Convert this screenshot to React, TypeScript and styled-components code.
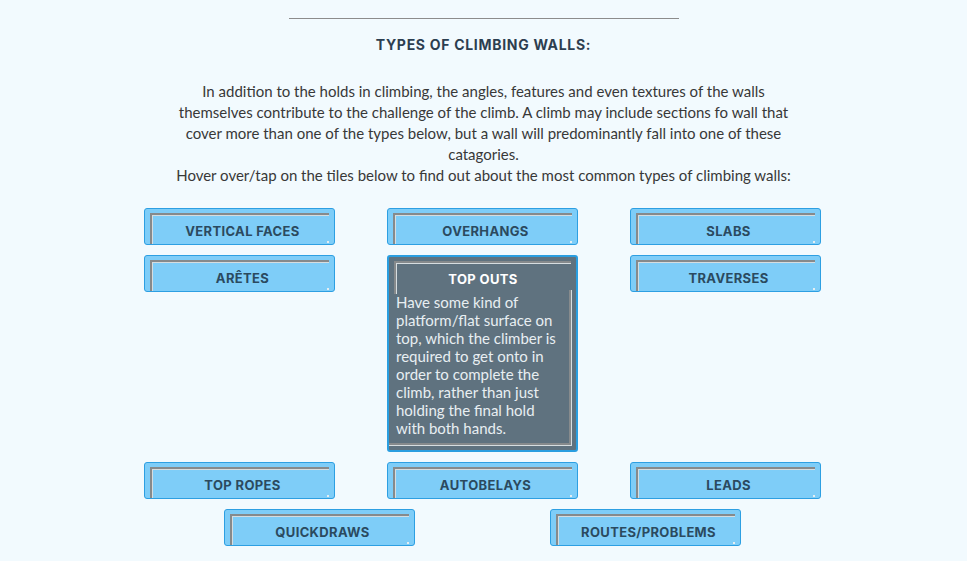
import styled, { createGlobalStyle, css } from 'styled-components'

const GlobalStyle = createGlobalStyle`
  body {
    margin: 0;
    background: #f2fafe;
    font-family: Lato, "Open Sans", sans-serif;
  }
`

const Page = styled.main`
  display: flex;
  flex-direction: column;
  align-items: center;
  padding-top: 18px;
  padding-bottom: 14px;
`

const Rule = styled.hr`
  width: 390px;
  height: 1px;
  margin: 0;
  border: none;
  background: #8c8c8c;
`

const Heading = styled.h2`
  margin: 17px 0 0;
  font-family: Inter, "Noto Sans", sans-serif;
  font-size: 14px;
  line-height: 18px;
  font-weight: 700;
  letter-spacing: 0.7px;
  color: #2c3e50;
`

const Intro = styled.p`
  width: 620px;
  margin: 27px 0 0;
  text-align: center;
  font-size: 15px;
  line-height: 21px;
  color: #383838;
`

const Grid = styled.div`
  width: 677px;
  margin: 22px 2px 0 0;
  display: grid;
  grid-template-columns: repeat(3, 191px);
  justify-content: space-between;
  align-items: start;
  row-gap: 10px;
`

const LastRow = styled.div`
  display: flex;
  justify-content: center;
  gap: 135px;
  margin: 10px 2px 0 0;
`

const Tile = styled.div<{ $open?: boolean }>`
  position: relative;
  box-sizing: border-box;
  width: 191px;
  min-height: 37px;
  padding: 13px 8px 3px;
  border: 1px solid #2d9fe2;
  border-radius: 3px;
  background: #7ecdf8;
  color: #2b4a5f;

  &::before {
    content: '';
    position: absolute;
    top: 4px;
    left: 5px;
    right: 5px;
    bottom: 0;
    border-top: 3px groove #d6dde0;
    border-left: 3px groove #d6dde0;
  }

  &::after {
    content: '';
    position: absolute;
    right: 5px;
    bottom: 1px;
    width: 2px;
    height: 2px;
    background: #e4eef2;
  }

  ${props =>
    props.$open &&
    css`
      padding: 13px 12px 13px 7px;
      border: 2px solid #2a9ee0;
      background: #5f727f;
      color: #ffffff;

      &::before {
        bottom: auto;
        height: 30px;
      }

      &::after {
        top: 33px;
        left: 0;
        right: 4px;
        bottom: 4px;
        width: auto;
        height: auto;
        background: none;
        border-right: 3px groove #d6dde0;
        border-bottom: 3px groove #d6dde0;
      }
    `}
`

const TileTitle = styled.div`
  padding-left: 6px;
  font-family: Inter, "Noto Sans", sans-serif;
  font-size: 13px;
  line-height: 18px;
  font-weight: 700;
  letter-spacing: 0.35px;
  text-align: center;
`

const TileText = styled.p`
  margin: 5px 0 0;
  font-size: 15px;
  line-height: 18px;
  color: #e8eef2;
`

const walls = [
  'VERTICAL FACES',
  'OVERHANGS',
  'SLABS',
  'ARÊTES',
  'TOP OUTS',
  'TRAVERSES',
  'TOP ROPES',
  'AUTOBELAYS',
  'LEADS',
]

const openWall = 'TOP OUTS'
const openText =
  'Have some kind of platform/flat surface on top, which the climber is required to get onto in order to complete the climb, rather than just holding the final hold with both hands.'

export default function App() {
  return (
    <>
      <GlobalStyle />
      <Page>
        <Rule />
        <Heading>TYPES OF CLIMBING WALLS:</Heading>
        <Intro>
          In addition to the holds in climbing, the angles, features and even textures of the walls
          themselves contribute to the challenge of the climb. A climb may include sections fo wall
          that cover more than one of the types below, but a wall will predominantly fall into one
          of these catagories.
          <br />
          Hover over/tap on the tiles below to find out about the most common types of climbing
          walls:
        </Intro>

        <Grid>
          {walls.map(name => (
            <Tile key={name} $open={name === openWall}>
              <TileTitle>{name}</TileTitle>
              {name === openWall && <TileText>{openText}</TileText>}
            </Tile>
          ))}
        </Grid>

        <LastRow>
          <Tile>
            <TileTitle>QUICKDRAWS</TileTitle>
          </Tile>
          <Tile>
            <TileTitle>ROUTES/PROBLEMS</TileTitle>
          </Tile>
        </LastRow>
      </Page>
    </>
  )
}
